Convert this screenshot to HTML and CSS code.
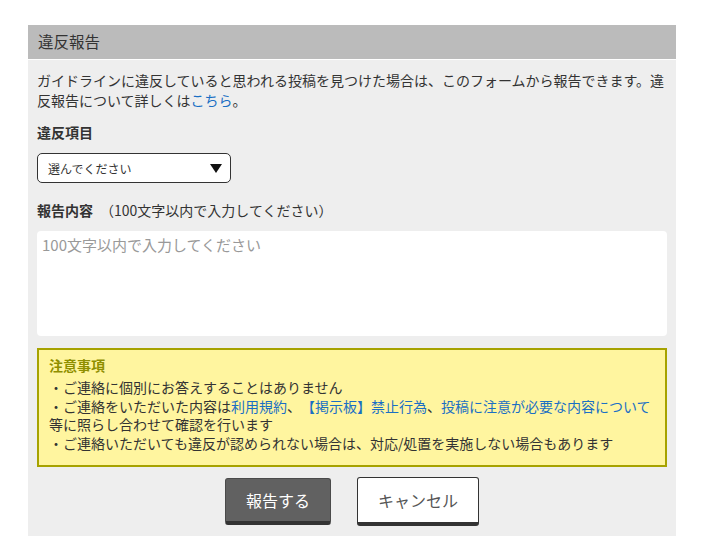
FILE: index.html
```html
<!DOCTYPE html>
<html lang="ja">
<head>
<meta charset="utf-8">
<title>違反報告</title>
<link rel="stylesheet" href="styles.css">
</head>
<body>
<section class="panel">
  <h2 class="panel-head">違反報告</h2>
  <div class="panel-body">
    <p class="desc">ガイドラインに違反していると思われる投稿を見つけた場合は、このフォームから報告できます。違反報告について詳しくは<a href="#" class="link">こちら</a>。</p>
    <div class="label">違反項目</div>
    <div class="select">
      <span class="select-text">選んでください</span>
      <svg class="select-arrow" width="12" height="9" viewBox="0 0 12 9"><polygon points="0,0 12,0 6,9" fill="#111"/></svg>
    </div>
    <div class="label label-gap">報告内容<span class="label-note">（100文字以内で入力してください）</span></div>
    <textarea class="textarea" placeholder="100文字以内で入力してください"></textarea>
    <div class="notice">
      <div class="notice-title">注意事項</div>
      <p class="notice-line">・ご連絡に個別にお答えすることはありません</p>
      <p class="notice-line">・ご連絡をいただいた内容は<a href="#" class="link">利用規約</a>、<a href="#" class="link">【掲示板】禁止行為</a>、<a href="#" class="link">投稿に注意が必要な内容について</a>等に照らし合わせて確認を行います</p>
      <p class="notice-line">・ご連絡いただいても違反が認められない場合は、対応/処置を実施しない場合もあります</p>
    </div>
    <div class="actions">
      <button class="btn btn-primary" type="button">報告する</button>
      <button class="btn btn-cancel" type="button">キャンセル</button>
    </div>
  </div>
</section>
</body>
</html>
```
FILE: styles.css
```css
* { box-sizing: border-box; }
html, body { margin: 0; padding: 0; background: #fff; }
body {
  font-family: "Noto Sans CJK JP", "Noto Sans", sans-serif;
  color: #333;
  font-size: 14px;
  text-spacing-trim: space-all;
}
.panel {
  width: 648px;
  margin: 25px 0 0 28px;
}
.panel-head {
  margin: 0;
  height: 35px;
  line-height: 33px;
  padding-left: 10px;
  background: #bbbbbb;
  border-bottom: 1px solid #fff;
  font-size: 15.5px;
  font-weight: normal;
  color: #333;
}
.panel-body {
  background: #eeeeee;
  padding: 10px 9px 10px 9px;
}
.desc {
  margin: 0;
  font-size: 14px;
  line-height: 20px;
}
.link { color: #1a6fc4; text-decoration: none; }
.label {
  margin-top: 12px;
  font-size: 14px;
  line-height: 20px;
  font-weight: bold;
}
.label-gap { margin-top: 17px; }
.label-note {
  font-weight: normal;
  margin-left: 7px;
}
.select {
  margin-top: 11px;
  width: 194px;
  height: 30px;
  background: #fff;
  border: 1px solid #333;
  border-radius: 5px;
  display: flex;
  align-items: center;
  justify-content: space-between;
  padding: 0 8px 0 10px;
}
.select-text { font-size: 12px; color: #333; }
.textarea {
  display: block;
  margin-top: 11px;
  width: 630px;
  height: 105px;
  border: none;
  border-radius: 4px;
  background: #fff;
  padding: 3px 5px;
  font-family: inherit;
  font-size: 15px;
  line-height: 22px;
  resize: none;
  color: #333;
}
.textarea::placeholder { color: #999; }
.notice {
  margin-top: 12px;
  background: #fff59f;
  border: 2px solid #a6a200;
  padding: 5px 10px 12px 10px;
}
.notice-title {
  font-weight: bold;
  color: #8f8f00;
  font-size: 14px;
  line-height: 21px;
  margin-bottom: 2px;
}
.notice-line {
  margin: 0;
  font-size: 14px;
  line-height: 18.7px;
}
.actions {
  margin-top: 10px;
  display: flex;
  justify-content: center;
  align-items: center;
  gap: 26px;
}
.btn {
  font-family: inherit;
  font-size: 16px;
  border-radius: 3px;
  cursor: pointer;
  padding: 0;
}
.btn-primary {
  width: 106px;
  height: 47px;
  background: #616161;
  color: #fff;
  border: 1px solid #4a4a4a;
  border-bottom: 4px solid #333;
}
.btn-cancel {
  width: 122px;
  height: 49px;
  background: #fff;
  color: #555;
  border: 1px solid #333;
  border-bottom: 4px solid #333;
}
```
